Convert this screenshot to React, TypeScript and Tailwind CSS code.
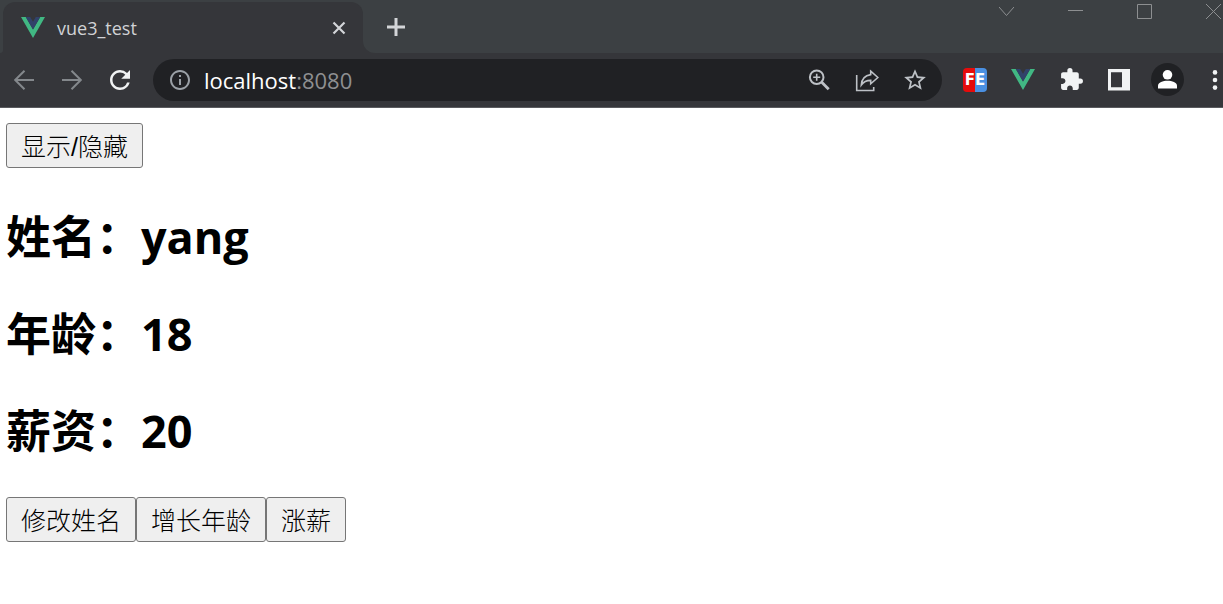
import React, { useState } from "react";
import { MdExtension, MdRefresh, MdStarBorder, MdInfoOutline } from "react-icons/md";

const UI_FONT = "font-['Open_Sans','Noto_Sans_CJK_SC',sans-serif]";

function VueLogo() {
  return (
    <svg width="24" height="21" viewBox="0 0 24 21" aria-hidden="true">
      <path d="M0 0h4.8L12 12.4 19.2 0H24L12 21z" fill="#41b883" />
      <path d="M4.8 0h4.4L12 4.8 14.8 0h4.4L12 12.4z" fill="#31426a" />
    </svg>
  );
}

function IconButton({ label, children }: { label: string; children: React.ReactNode }) {
  return (
    <button type="button" aria-label={label} className="flex h-12 w-12 shrink-0 items-center justify-center">
      {children}
    </button>
  );
}

function ArrowIcon({ forward = false }: { forward?: boolean }) {
  return (
    <svg width="20" height="20" viewBox="0 0 20 20" fill="none" stroke="#84888c" strokeWidth="2">
      {forward ? <path d="M0 10h18.5M9.5 .7l9.3 9.3-9.3 9.3" /> : <path d="M20 10H1.5M10.5 .7L1.2 10l9.3 9.3" />}
    </svg>
  );
}

function TabStrip() {
  return (
    <div className="flex h-[53px] bg-[#35363a]">
      <div className="w-[3px] shrink-0 rounded-br-lg bg-[#3c4043]" />
      <div className="w-[360px] shrink-0 bg-[#3c4043] pt-[2px]">
        <div className="flex h-full items-center rounded-t-xl bg-[#35363a] pr-[17px] pl-[18px]">
          <VueLogo />
          <span className="ml-3 flex-1 text-[18px] leading-6 text-[#d0d2d5]">vue3_test</span>
          <button type="button" aria-label="Close tab">
            <svg width="14" height="14" viewBox="0 0 14 14" stroke="#d3d5d8" strokeWidth="2.2">
              <path d="M1.5 1.5l11 11M12.5 1.5l-11 11" />
            </svg>
          </button>
        </div>
      </div>
      <div className="flex min-w-0 flex-1 items-start justify-between overflow-hidden rounded-bl-xl bg-[#3c4043]">
        <button type="button" aria-label="New tab" className="ml-6 flex h-[53px] items-center">
          <svg width="18" height="18" viewBox="0 0 18 18" stroke="#d3d5d8" strokeWidth="3">
            <path d="M9 0v18M0 9h18" />
          </svg>
        </button>
        <div className="flex shrink-0 gap-[54px] pt-1 text-[#8d8f91]">
          <button type="button" aria-label="Search tabs">
            <svg width="15" height="15" viewBox="0 0 15 15" fill="none" stroke="currentColor">
              <path d="M0 3l7.5 8.5L15 3" />
            </svg>
          </button>
          <button type="button" aria-label="Minimize">
            <svg width="15" height="15" viewBox="0 0 15 15" stroke="currentColor">
              <path d="M0 6.5h15" />
            </svg>
          </button>
          <button type="button" aria-label="Maximize">
            <svg width="15" height="15" viewBox="0 0 15 15" fill="none" stroke="currentColor">
              <path d="M.5 .5h14v14H.5z" />
            </svg>
          </button>
          <button type="button" aria-label="Close">
            <svg width="17" height="15" viewBox="0 0 17 15" stroke="currentColor">
              <path d="M0 0l15 15M15 0L0 15" />
            </svg>
          </button>
        </div>
      </div>
    </div>
  );
}

function Toolbar() {
  return (
    <div className="flex h-[55px] items-center border-b border-[#5a5b5f] bg-[#35363a] pb-px">
      <IconButton label="Back"><ArrowIcon /></IconButton>
      <IconButton label="Forward"><ArrowIcon forward /></IconButton>
      <IconButton label="Reload"><MdRefresh size={30} color="#f1f3f4" /></IconButton>
      <div className="ml-[9px] flex h-[42px] min-w-0 flex-1 items-center rounded-full bg-[#202124] pr-[3px] pl-[15px]">
        <MdInfoOutline size={24} color="#9aa0a6" className="shrink-0" />
        <div className="ml-3 min-w-0 flex-1 text-[22px] leading-7 text-[#8e8f91]">
          <span className="text-white">localhost</span>:8080
        </div>
        <IconButton label="Zoom">
          <svg width="24" height="24" viewBox="0 0 24 24" fill="none" stroke="#bdc1c6" strokeWidth="2">
            <circle cx="9.7" cy="9.2" r="6.8" />
            <path d="M6.2 9.2h7M9.7 5.7v7" strokeWidth="1.6" />
            <path d="M14.5 14l7.2 7.2" strokeWidth="2.8" />
          </svg>
        </IconButton>
        <IconButton label="Share">
          <svg width="24" height="24" viewBox="0 0 24 24" fill="none" stroke="#bdc1c6" strokeWidth="1.6">
            <path d="M1.7 7v15.5h17V19" />
            <path d="M15.7 3.2l7.2 6.3-7.2 6.3v-3.4c-4.6 0-7.2 1.4-9.4 4.6.4-5.8 3.6-9.6 9.4-10.4z" />
          </svg>
        </IconButton>
        <IconButton label="Bookmark"><MdStarBorder size={26} color="#bdc1c6" /></IconButton>
      </div>
      <div className="ml-[9px] flex shrink-0 items-center">
        <IconButton label="FE extension">
          <span className="flex h-6 w-6 items-center justify-center rounded-sm bg-linear-to-r from-[#e60b0b] from-50% to-[#4a90e2] to-50% font-['DejaVu_Sans',sans-serif] text-[15px] leading-6 font-bold text-white">
            FE
          </span>
        </IconButton>
        <IconButton label="Vue devtools"><VueLogo /></IconButton>
        <IconButton label="Extensions"><MdExtension size={25} color="#f1f3f4" /></IconButton>
        <IconButton label="Side panel">
          <svg width="22" height="22" viewBox="0 0 22 22">
            <path fillRule="evenodd" fill="#f1f3f4" d="M0 0h22v21.5H0zM3 3.3v15h11v-15z" />
          </svg>
        </IconButton>
        <IconButton label="Profile">
          <svg width="33" height="33" viewBox="0 0 33 33">
            <circle cx="16.5" cy="16.5" r="16.5" fill="#202124" />
            <circle cx="16.5" cy="11.8" r="4.8" fill="#fff" />
            <path d="M7 25.5v-2.7c0-3.4 5-5 9.5-5s9.5 1.6 9.5 5v2.7z" fill="#fff" />
          </svg>
        </IconButton>
        <button type="button" aria-label="Menu" className="flex h-12 w-8 items-center justify-end pr-[5px]">
          <svg width="6" height="20" viewBox="0 0 6 20" fill="#f1f3f4">
            <circle cx="3" cy="2.4" r="2.3" />
            <circle cx="3" cy="10" r="2.3" />
            <circle cx="3" cy="17.6" r="2.3" />
          </svg>
        </button>
      </div>
    </div>
  );
}

function PageButton({ onClick, children }: { onClick: () => void; children: React.ReactNode }) {
  return (
    <button
      type="button"
      onClick={onClick}
      className="h-[45px] rounded-[3px] border border-[#767676] bg-[#efefef] px-[14px] pt-[3px] font-['Liberation_Sans','Noto_Sans_CJK_SC',sans-serif] text-[25px] leading-10 font-light text-black"
    >
      {children}
    </button>
  );
}

export default function App() {
  const [visible, setVisible] = useState(true);
  const [name, setName] = useState("yang");
  const [age, setAge] = useState(18);
  const [salary, setSalary] = useState(20);

  return (
    <div className={`min-h-screen bg-white ${UI_FONT}`}>
      <header>
        <TabStrip />
        <Toolbar />
      </header>
      <main className="px-[6px] pt-[15px] text-black">
        <PageButton onClick={() => setVisible(!visible)}>显示/隐藏</PageButton>
        {visible && (
          <section>
            <div className="flex flex-col gap-[37px] pt-[39px] pb-9 text-[45px] leading-[60px] font-bold">
              <h2>姓名：{name}</h2>
              <h2>年龄：{age}</h2>
              <h2>薪资：{salary}</h2>
            </div>
            <div className="flex">
              <PageButton onClick={() => setName(name + "~")}>修改姓名</PageButton>
              <PageButton onClick={() => setAge(age + 1)}>增长年龄</PageButton>
              <PageButton onClick={() => setSalary(salary + 1)}>涨薪</PageButton>
            </div>
          </section>
        )}
      </main>
    </div>
  );
}
